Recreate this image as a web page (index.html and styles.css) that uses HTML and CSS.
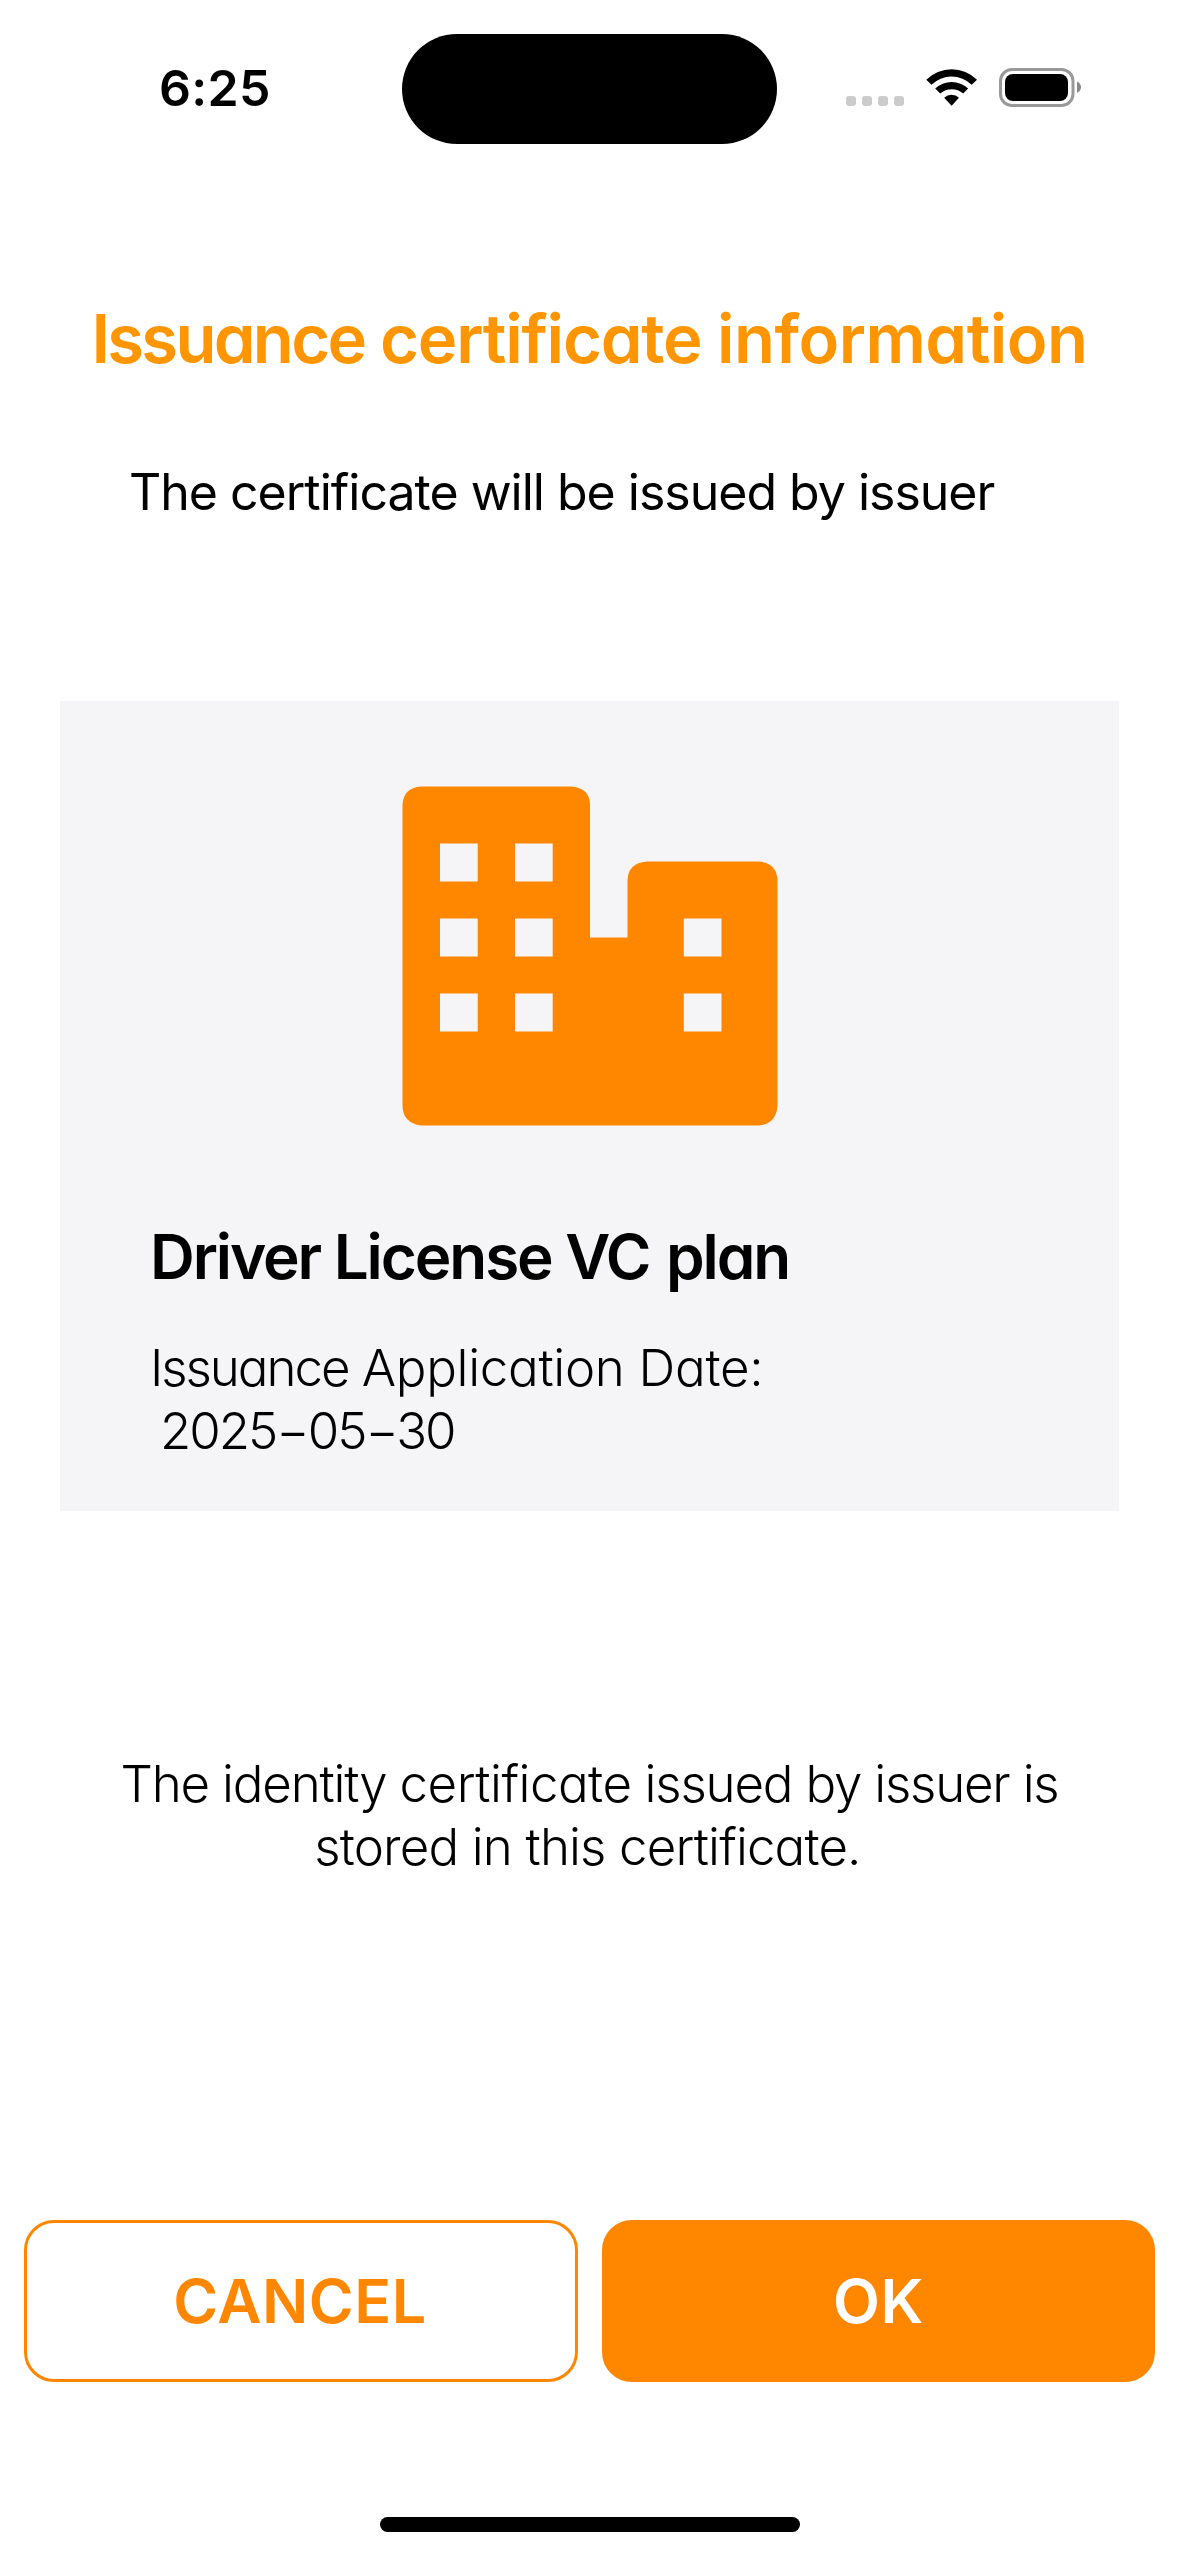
FILE: index.html
```html
<!DOCTYPE html>
<html lang="en">
<head>
<meta charset="utf-8">
<title>Issuance certificate information</title>
<link rel="stylesheet" href="styles.css">
</head>
<body>
<div class="screen">
  <header class="status">
    <span class="time">6:25</span>
    <div class="island"></div>
    <svg class="indicators" viewBox="0 0 240 44" width="240" height="44">
      <g fill="#ccc">
        <rect x="0" y="30" width="10" height="10" rx="3"/>
        <rect x="16" y="30" width="10" height="10" rx="3"/>
        <rect x="32" y="30" width="10" height="10" rx="3"/>
        <rect x="48" y="30" width="10" height="10" rx="3"/>
      </g>
      <path d="M80.3 13.8A36 36 0 0 1 131 13.8L125.700 18.700A29 29 0 0 0 85.500 18.700ZM89.200 22.600A24 24 0 0 1 122.100 22.600L117.200 27.500A17.500 17.500 0 0 0 94.200 27.500ZM98.200 31.700A11 11 0 0 1 113 31.700L105.600 39.800Z"/>
      <rect x="154.500" y="3.500" width="72.500" height="36" rx="11.500" fill="none" stroke="#999" stroke-width="3"/>
      <rect x="159" y="8" width="63" height="27" rx="8"/>
      <path d="M231 15.500Q235 17.500 235 21.300Q235 25 231 27Z" fill="#888"/>
    </svg>
  </header>
  <main class="content">
    <h1 class="title"><span class="tight">Issuance</span> certificate <span class="loose">information</span></h1>
    <p class="lead">The certificate will be issued by issuer</p>
    <section class="card">
      <svg class="building" viewBox="0 0 376 340" width="376" height="340">
        <path fill="#ff8700" fill-rule="evenodd" d="M19 0.500H169Q188 2 188 19V151.500H225.500V94.500Q226 77 244.500 75.500H357Q375 77 375.500 94.500V320Q374 338 357 339.500H19Q1 337 0.500 320V19Q1 2 19 0.500ZM38 57.500V95.500H75.700V57.500ZM113 57.500V95.500H150.700V57.500ZM38 132.500V170.500H75.700V132.500ZM113 132.500V170.500H150.700V132.500ZM38 207.500V245.500H75.700V207.500ZM113 207.500V245.500H150.700V207.500ZM281.800 132.500V170.500H319.500V132.500ZM281.800 207.500V245.500H319.500V207.500Z"/>
      </svg>
      <h2 class="plan">Driver License VC <span class="plan-word">plan</span></h2>
      <p class="date"><span class="tight">Issuance</span> <span class="loose">Application Date:</span></p>
      <p class="date date-value">2025−05−30</p>
    </section>
    <p class="note note-first">The identity <span class="loose">certificate</span> issued by issuer is</p>
    <p class="note note-second">stored in this certificate.</p>
  </main>
  <footer class="actions">
    <button class="button outline">CANCEL</button>
    <button class="button solid">OK</button>
  </footer>
  <div class="home"></div>
</div>
</body>
</html>
```
FILE: styles.css
```css
* { box-sizing: border-box; margin: 0; padding: 0; }
body {
  background: #fff;
  color: #000;
  font-family: Inter, "Liberation Sans", sans-serif;
}
.screen {
  width: 1179px;
  height: 2556px;
  display: flex;
  flex-direction: column;
  overflow: hidden;
}
.status {
  height: 177px;
  display: grid;
  grid-template-columns: 402px 375px 402px;
  align-items: start;
  padding-top: 34px;
}
.time {
  margin-left: 159px;
  padding-top: 24px;
  font-size: 50px;
  line-height: 60px;
  font-weight: 590;
  letter-spacing: 0.3px;
}
.island { height: 110px; border-radius: 55px; background: #000; }
.indicators { margin: 32px 0 0 69px; }
.content { display: flex; flex-direction: column; }
.title {
  margin-top: 122px;
  line-height: 80px;
  font-size: 67px;
  font-weight: 570;
  letter-spacing: -1.25px;
  color: #ff9500;
  text-align: center;
  white-space: nowrap;
  font-feature-settings: "cv11";
}
.title .tight { letter-spacing: -2.7px; }
.title .loose { letter-spacing: -0.5px; }
.lead {
  margin: 82px 0 0 129px;
  line-height: 62px;
  font-size: 50px;
  font-weight: 400;
  letter-spacing: -1px;
  white-space: nowrap;
}
.card {
  margin: 178px 60px 0;
  height: 810px;
  padding: 85px 90px 0;
  background: #f5f5f8;
  font-feature-settings: "cv11";
  white-space: nowrap;
}
.building { display: block; margin: 0 auto; }
.plan { margin-top: 91px; font-size: 62px; line-height: 80px; font-weight: 590; letter-spacing: -2.1px; }
.plan-word { margin-left: 3px; }
.date { margin-top: 39px; font-size: 51px; line-height: 63px; font-weight: 300; letter-spacing: -1.05px; }
.date .tight { letter-spacing: -2.05px; }
.date .loose { letter-spacing: -0.3px; }
.date-value { margin: 0 0 0 10px; letter-spacing: -2px; }
.note {
  font-size: 51px;
  line-height: 63px;
  font-weight: 300;
  letter-spacing: -1.2px;
  text-align: center;
  white-space: nowrap;
  font-feature-settings: "cv11";
}
.note .loose { letter-spacing: -0.5px; }
.note-first { margin-top: 241px; }
.note-second { padding-right: 4px; letter-spacing: -0.85px; }
.actions {
  margin-top: auto;
  padding: 0 24px;
  display: grid;
  grid-template-columns: 554px 553px;
  gap: 24px;
}
.button {
  height: 162px;
  border: 3px solid #ff8700;
  border-radius: 30px;
  background: #fff;
  color: #ff8700;
  font: 560 61px/80px Inter, "Liberation Sans", sans-serif;
  letter-spacing: 0.5px;
}
.outline { padding-right: 2px; }
.solid { background: #ff8700; color: #fff; }
.home {
  width: 420px;
  height: 15px;
  margin: 135px auto 24px 380px;
  flex: none;
  border-radius: 8px;
  background: #000;
}
```
